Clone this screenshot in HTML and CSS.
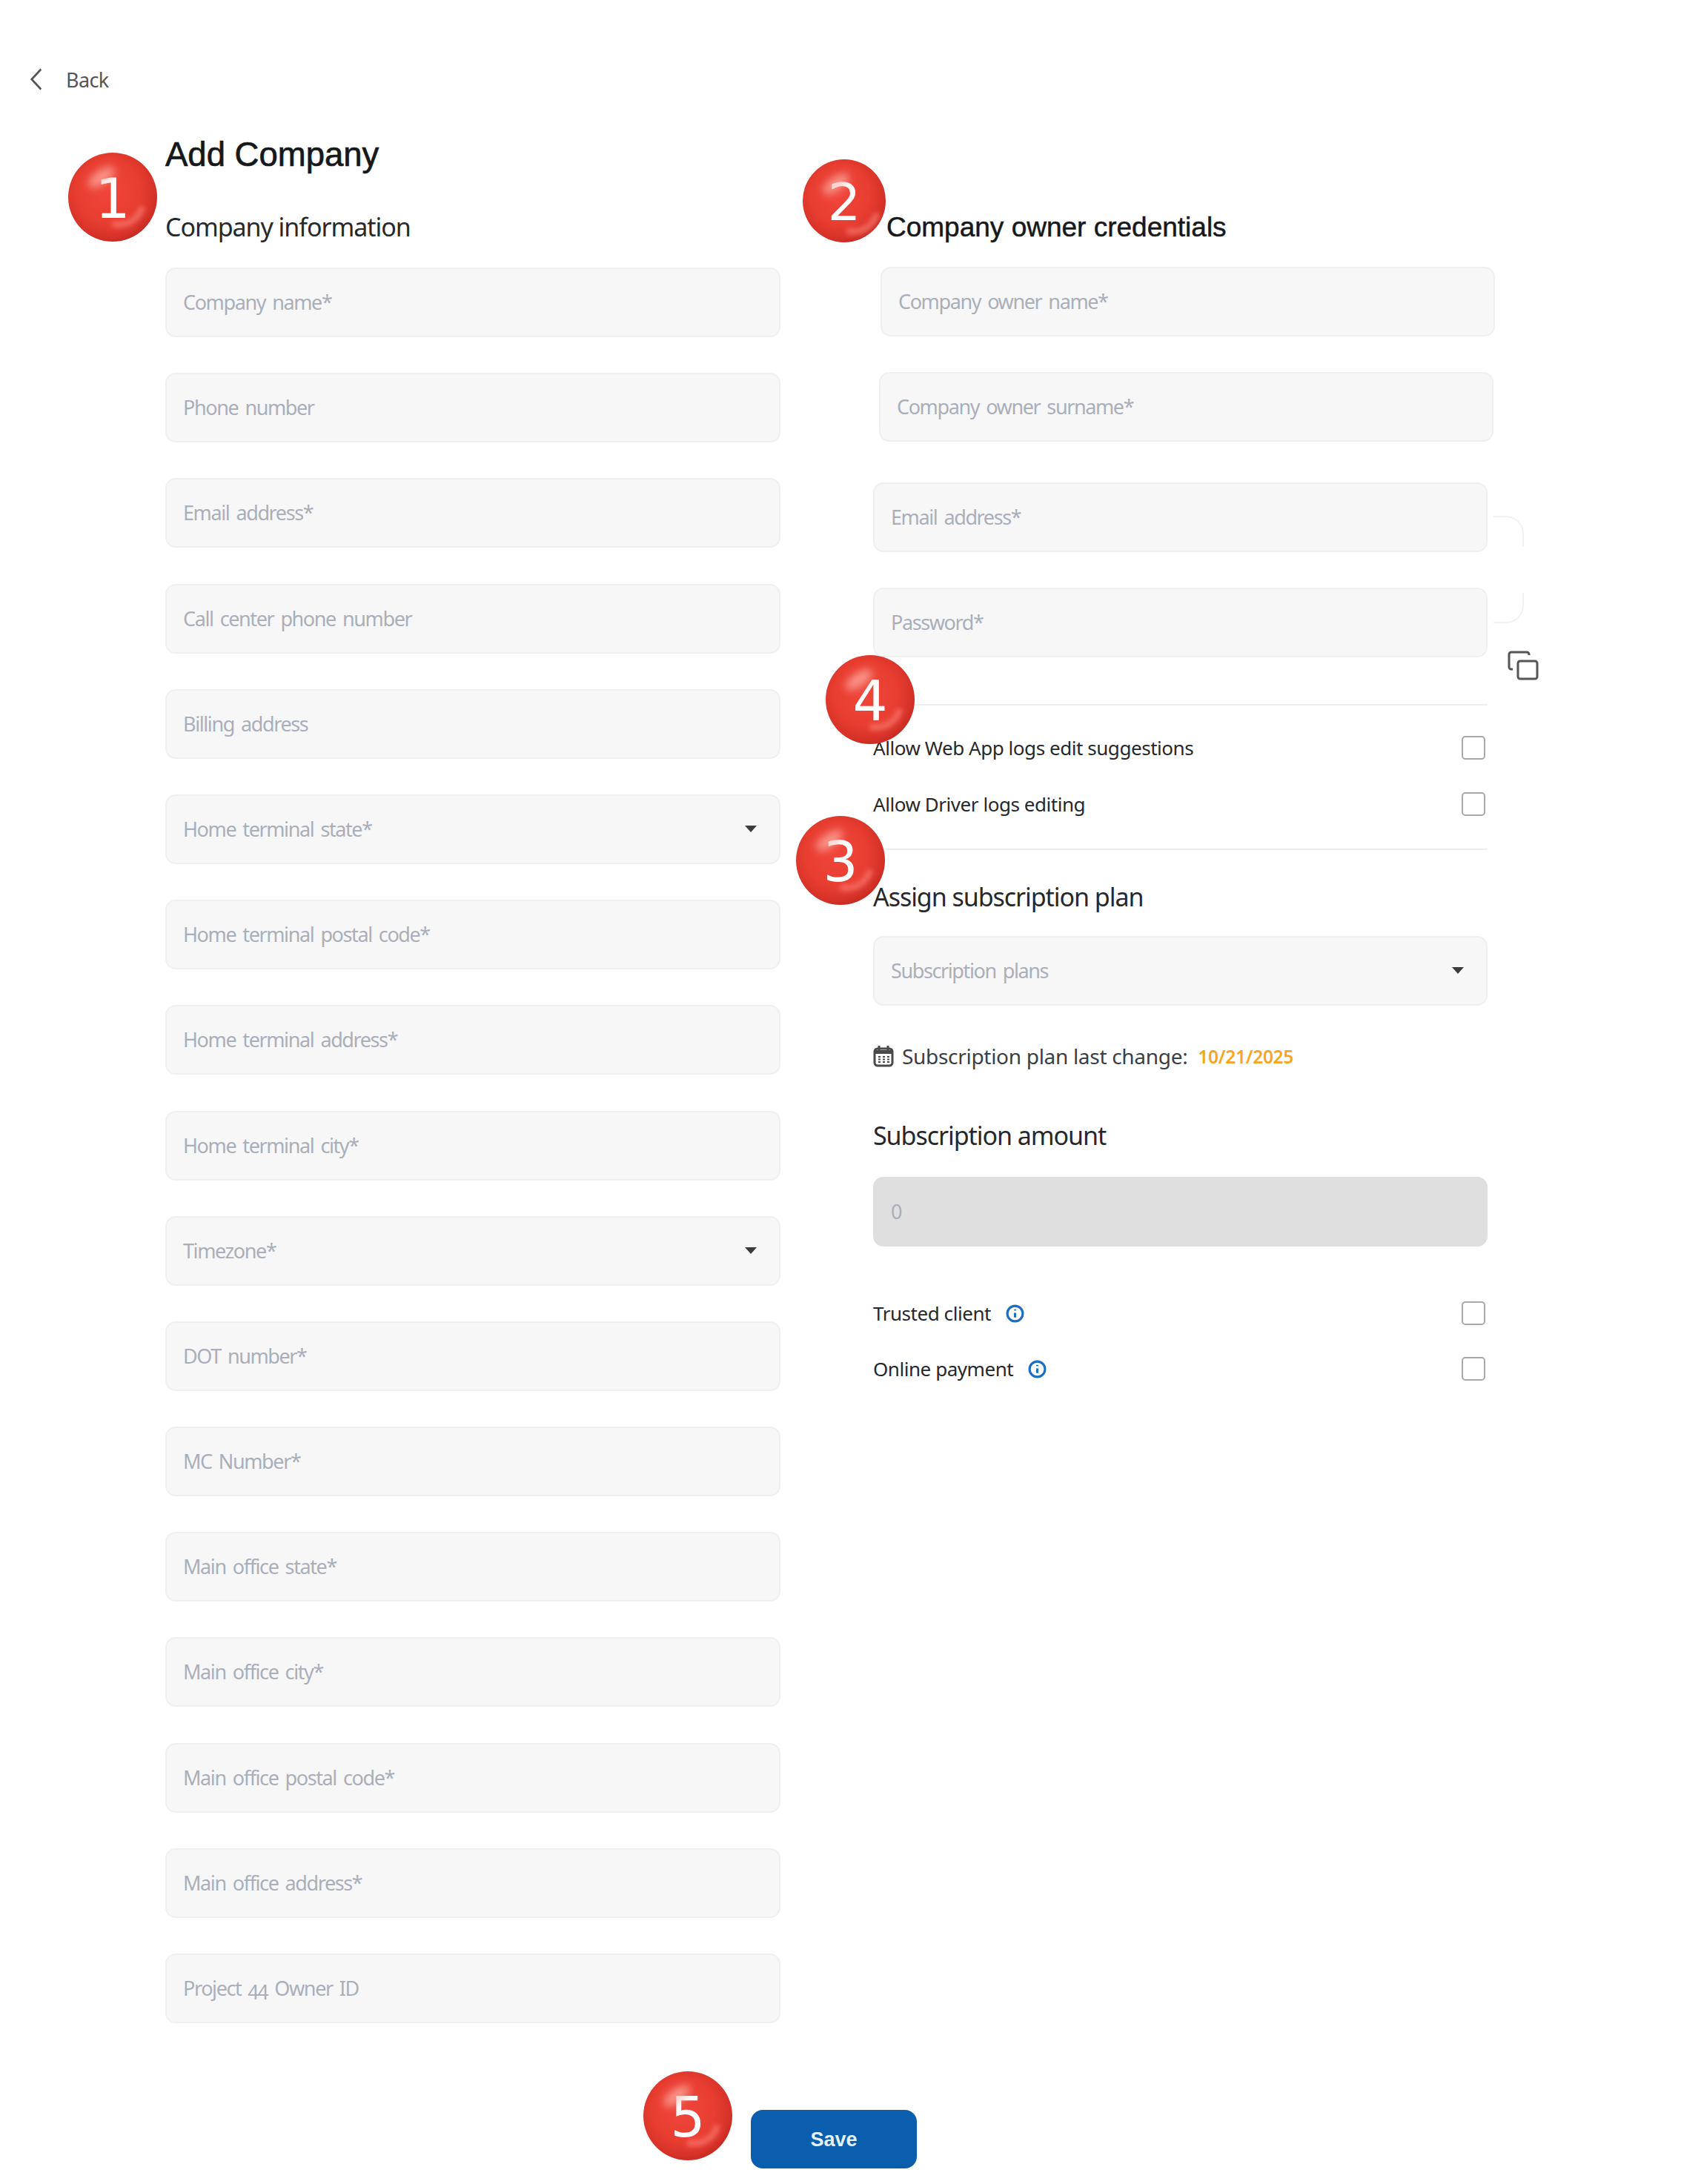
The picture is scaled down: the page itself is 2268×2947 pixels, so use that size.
FILE: index.html
```html
<!DOCTYPE html>
<html lang="en">
<head>
    <meta charset="UTF-8">
    <meta name="viewport" content="width=device-width, initial-scale=1.0">
    <title>Add Company</title>
    <link rel="stylesheet" href="styles.css">
</head>
<body>

    <div class="page">
        <a class="back-link">
            <svg class="back-icon" viewBox="0 0 20 34"><path d="M17 2 3 17l14 15"/></svg>
            <span>Back</span>
        </a>

        <h1>Add Company</h1>

        <div class="columns">
            <!-- company info -->
            <div class="col-left">
                <h2 class="section-title">Company information</h2>
                <div class="field-list">
                    <div class="field">Company name*</div>
                    <div class="field">Phone number</div>
                    <div class="field">Email address*</div>
                    <div class="field">Call center phone number</div>
                    <div class="field">Billing address</div>
                    <div class="field select">Home terminal state*<i class="caret"></i></div>
                    <div class="field">Home terminal postal code*</div>
                    <div class="field">Home terminal address*</div>
                    <div class="field">Home terminal city*</div>
                    <div class="field select">Timezone*<i class="caret"></i></div>
                    <div class="field">DOT number*</div>
                    <div class="field">MC Number*</div>
                    <div class="field">Main office state*</div>
                    <div class="field">Main office city*</div>
                    <div class="field">Main office postal code*</div>
                    <div class="field">Main office address*</div>
                    <div class="field old-nums">Project 44 Owner ID</div>
                </div>
            </div>

            <!-- owner credentials -->
            <div class="col-right">
                <h2 class="owner-title">Company owner credentials</h2>
                <div class="field owner-name">Company owner name*</div>
                <div class="field owner-surname">Company owner surname*</div>
                <div class="field owner-email">Email address*</div>
                <div class="field owner-password">Password*</div>

                <span class="ghost ghost-top"></span>
                <span class="ghost ghost-bottom"></span>
                <svg class="copy-icon" viewBox="0 0 42 40">
                    <path d="M7 25H5a3 3 0 0 1-3-3V5a3 3 0 0 1 3-3h21a3 3 0 0 1 3 3v1"/>
                    <rect x="14" y="14" width="26" height="24" rx="3"/>
                </svg>

                <hr class="divider first">
                <div class="check-row"><span>Allow Web App logs edit suggestions</span><i class="checkbox"></i></div>
                <div class="check-row second"><span>Allow Driver logs editing</span><i class="checkbox"></i></div>
                <hr class="divider second-line">

                <h2 class="section-title plan-title">Assign subscription plan</h2>
                <div class="field select plans">Subscription plans<i class="caret"></i></div>

                <div class="last-change">
                    <svg class="calendar-icon" viewBox="0 0 28 30">
                        <rect x="2" y="5" width="24" height="23" rx="4"/>
                        <path class="band" d="M2 9.500h24"/>
                        <path d="M8 1v6M20 1v6"/>
                        <path class="dots" d="M7 16h3M13 16h3M19 16h3M7 19.500h3M13 19.500h3M19 19.500h3M7 23h3M13 23h3M19 23h3"/>
                    </svg>
                    <span>Subscription plan last change:</span>
                    <b>10/21/2025</b>
                </div>

                <h2 class="section-title amount-title">Subscription amount</h2>
                <div class="field disabled">0</div>

                <div class="check-row trusted">
                    <span class="with-info">Trusted client
                        <svg class="info-icon" viewBox="0 0 24 24"><circle cx="12" cy="12" r="10"/><path d="M12 11v6"/><path d="M12 6.500v1.500"/></svg>
                    </span>
                    <i class="checkbox"></i>
                </div>
                <div class="check-row online">
                    <span class="with-info">Online payment
                        <svg class="info-icon" viewBox="0 0 24 24"><circle cx="12" cy="12" r="10"/><path d="M12 11v6"/><path d="M12 6.500v1.500"/></svg>
                    </span>
                    <i class="checkbox"></i>
                </div>
            </div>
        </div>

        <div class="actions">
            <button class="save-btn">Save</button>
        </div>

        <!-- numbered markers on top of the form -->
        <div class="marker m1">1</div>
        <div class="marker m2">2</div>
        <div class="marker m3">3</div>
        <div class="marker m4">4</div>
        <div class="marker m5">5</div>
    </div>

</body>
</html>
```

FILE: styles.css
```css
body {
    margin: 0;
    background-color: #fff;
    font-family: "Noto Sans", "Open Sans", sans-serif;
    color: #26282c;
}
.page {
    position: relative;
    width: 2268px;
    height: 2947px;
    padding-top: 87px;
    box-sizing: border-box;
}
.back-link {
    display: flex;
    align-items: center;
    gap: 31px;
    height: 40px;
    padding-left: 40px;
    font-size: 27px;
    letter-spacing: -0.6px;
    color: #555;
}
.back-icon {
    width: 18px;
    height: 32px;
    fill: none;
    stroke: #555;
    stroke-width: 3;
}
h1 {
    margin: 57px 0 0 223px;
    font-family: "Liberation Sans", Arial, sans-serif;
    font-size: 45.5px;
    line-height: 50px;
    font-weight: normal;
    -webkit-text-stroke: 0.7px #17181a;
    color: #17181a;
}
.columns {
    display: grid;
    grid-template-columns: 830px 829px;
    column-gap: 125px;
    margin: 47px 0 0 223px;
}
.section-title {
    margin: 0;
    font-size: 34px;
    line-height: 50px;
    font-weight: normal;
    letter-spacing: -1.05px;
}
.field-list {
    display: flex;
    flex-direction: column;
    gap: 48.2px;
    margin-top: 30px;
}
.field {
    display: flex;
    align-items: center;
    justify-content: space-between;
    box-sizing: border-box;
    height: 94px;
    padding: 0 30px 1px 22px;
    background-color: #f7f7f8;
    border: 2px solid #eef0f3;
    border-radius: 14px;
    font-size: 27px;
    letter-spacing: -1.4px;
    word-spacing: 3.5px;
    color: #aaafb9;
}
.old-nums {
    font-variant-numeric: oldstyle-nums;
}
.caret {
    width: 0;
    height: 0;
    border-left: 8px solid transparent;
    border-right: 8px solid transparent;
    border-top: 9px solid #3c3c3e;
}
.col-right {
    position: relative;
}
.owner-title {
    margin: 1px 0 28px 18px;
    font-family: "Liberation Sans", Arial, sans-serif;
    font-size: 37px;
    line-height: 50px;
    font-weight: normal;
    -webkit-text-stroke: 0.5px #17181a;
    color: #17181a;
}
.owner-name {
    margin-left: 10px;
    width: 829px;
}
.owner-surname {
    margin: 48px 0 0 8px;
    width: 829px;
}
.owner-email {
    margin-top: 55px;
}
.owner-password {
    margin-top: 48px;
}
/* leftover field corners peeking out on the right */
.ghost {
    position: absolute;
    left: 837px;
    width: 41px;
    height: 41px;
    border: 2px solid #f0f2f5;
    border-left: 0;
    box-sizing: border-box;
}
.ghost-top {
    top: 415px;
    border-bottom: 0;
    border-top-right-radius: 24px;
}
.ghost-bottom {
    top: 519px;
    border-top: 0;
    border-bottom-right-radius: 24px;
}
.copy-icon {
    position: absolute;
    left: 856px;
    top: 597px;
    width: 42px;
    height: 40px;
    fill: none;
    stroke: #555;
    stroke-width: 3;
}
.divider {
    height: 2px;
    margin: 0;
    border: 0;
    background-color: #eceef2;
}
.divider.first {
    margin-top: 63px;
}
.divider.second-line {
    margin-top: 40px;
}
.check-row {
    display: flex;
    align-items: center;
    justify-content: space-between;
    height: 40px;
    margin-top: 37px;
    padding-right: 3px;
    font-size: 26px;
    letter-spacing: -0.45px;
}
.check-row.second {
    margin-top: 36px;
}
.check-row.trusted {
    margin-top: 70px;
}
.check-row.online {
    margin-top: 35px;
}
.checkbox {
    box-sizing: border-box;
    width: 32px;
    height: 32px;
    background-color: #fff;
    border: 2.500px solid #a6a8ac;
    border-radius: 5px;
}
.with-info {
    display: flex;
    align-items: center;
    gap: 20px;
}
.info-icon {
    width: 25px;
    height: 25px;
    fill: none;
    stroke: #1b6fbe;
    stroke-width: 3;
}
.plan-title {
    margin-top: 38px;
}
.plans {
    margin-top: 28px;
}
.last-change {
    display: flex;
    align-items: center;
    height: 40px;
    margin-top: 48px;
    font-size: 28px;
    letter-spacing: -0.3px;
    color: #3c3e42;
}
.last-change b {
    margin-left: 14px;
    font-size: 24.5px;
    font-weight: 600;
    color: #f6a623;
}
.calendar-icon {
    width: 28px;
    height: 30px;
    margin-right: 11px;
    fill: none;
    stroke: #4a4a4c;
    stroke-width: 3;
}
.calendar-icon .band {
    stroke-width: 5;
}
.calendar-icon .dots {
    stroke-width: 2;
}
.amount-title {
    margin-top: 62px;
}
.disabled {
    margin-top: 31px;
    background-color: #dfdfdf;
    border-color: #dfdfdf;
}
.actions {
    display: flex;
    margin: 117px 0 0 1013px;
}
.save-btn {
    width: 224px;
    height: 79px;
    padding-top: 3px;
    background-color: #0b5ead;
    border: 0;
    border-radius: 16px;
    font-family: "Liberation Sans", Arial, sans-serif;
    font-size: 27px;
    font-weight: bold;
    color: #e6f0fa;
}
.marker {
    position: absolute;
    display: flex;
    align-items: center;
    justify-content: center;
    box-sizing: border-box;
    width: 120px;
    height: 120px;
    padding-top: 3px;
    border-radius: 50%;
    overflow: hidden;
    background: radial-gradient(circle at 45% 43%, #f0453a 0%, #e83d31 45%, #d63228 66%, #ad1f19 86%, #861110 100%);
    font-family: "DejaVu Sans", sans-serif;
    font-size: 74px;
    line-height: 1;
    color: #fff;
}
/* shine top left */
.marker::before {
    content: "";
    position: absolute;
    left: 24px;
    top: 24px;
    width: 42px;
    height: 18px;
    border-radius: 50%;
    background-color: rgba(255, 185, 175, 0.7);
    transform: rotate(-35deg);
    filter: blur(6px);
}
/* glow crescent bottom right */
.marker::after {
    content: "";
    position: absolute;
    left: 30px;
    top: 26px;
    width: 76px;
    height: 76px;
    box-sizing: border-box;
    border-radius: 50%;
    border: 9px solid transparent;
    border-bottom-color: rgba(255, 130, 120, 0.6);
    transform: rotate(-30deg);
    filter: blur(3px);
}
.m1 { left: 92px; top: 206px; }
.m2 { left: 1083px; top: 215px; width: 112px; height: 112px; font-size: 70px; }
.m3 { left: 1074px; top: 1101px; }
.m4 { left: 1114px; top: 884px; }
.m5 { left: 868px; top: 2795px; }
```
